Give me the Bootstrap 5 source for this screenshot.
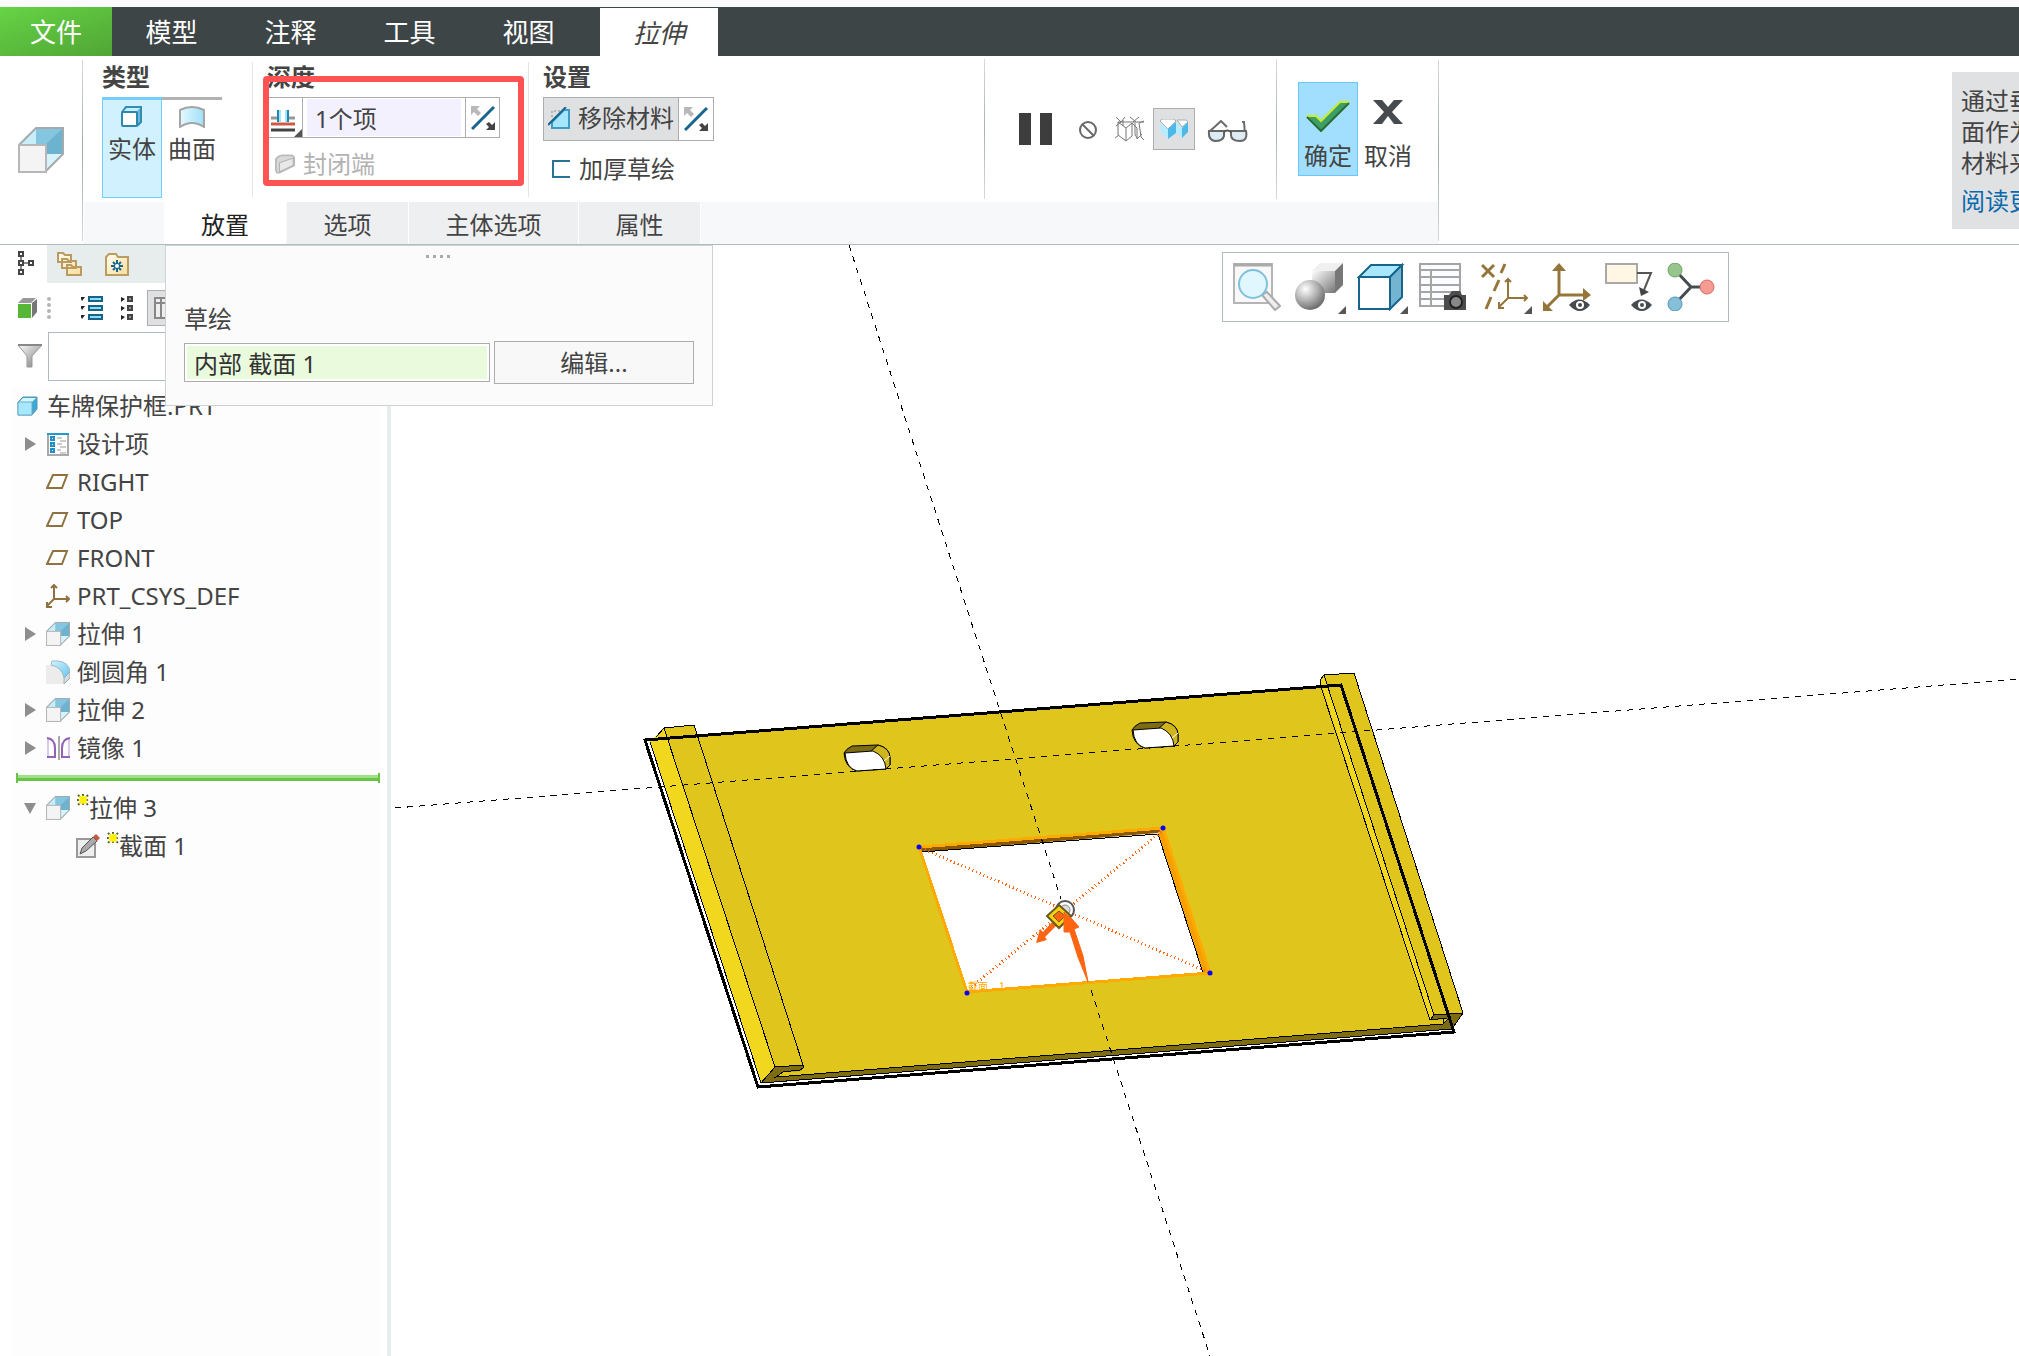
<!DOCTYPE html>
<html lang="zh-CN">
<head>
<meta charset="utf-8">
<meta name="viewport" content="width=device-width, initial-scale=1">
<title>车牌保护框.PRT</title>
<link rel="stylesheet" href="https://cdn.jsdelivr.net/npm/bootstrap@5.3.0/dist/css/bootstrap.min.css">
<style>
  body { font-family: "Noto Sans", "Noto Sans CJK SC", sans-serif; font-size: 24px; line-height: 32px; color: #444; background: #fff; overflow: hidden; }
  svg { display: block; flex: none; }
  button { background: none; border: 0; padding: 0; color: inherit; white-space: nowrap; }
  .title-strip { height: 7px; background: #fbfbfb; }

  /* main tabs */
  .main-tabs { height: 49px; background: #3d4547; font-size: 26px; }
  .main-tabs a { width: 119px; color: #fff; text-decoration: none; display: flex; align-items: center; justify-content: center; padding-top: 1px; }
  .main-tabs .file-tab { width: 112px; background: linear-gradient(160deg, #66d445, #50a535); }
  .main-tabs .open-tab { width: 118px; margin: 1px 0 0 12px; background: #fff; color: #444; font-style: italic; }

  /* ribbon */
  .ribbon { height: 189px; border-bottom: 1px solid #aebcbe; }
  .launcher { width: 83px; padding: 71px 0 0 18px; position: relative; }
  .edge::after { content: ""; position: absolute; right: 0; top: 4px; bottom: 3px; width: 1px; background: linear-gradient(#d5dada, #9fa9aa, #d5dada); }
  .tool-row { height: 146px; }
  .grp { position: relative; padding-top: 5px; }
  .grp::after { content: ""; position: absolute; right: 0; top: 6px; bottom: 5px; width: 1px; background: #e2e4e5; }
  .grp.strong::after { top: 3px; bottom: 3px; background: linear-gradient(#d5dada, #a9b2b3, #d5dada); }
  .grp:last-child::after { display: none; }
  .grp-name { font-weight: 700; line-height: 32px; height: 36px; color: #444; }
  .g-type { width: 170px; padding-left: 19px; }
  .g-depth { width: 276px; padding-left: 14px; }
  .g-set { width: 456px; padding-left: 14px; }
  .g-ctl { width: 292px; padding: 52px 0 0 33px; }
  .g-ok { width: 162px; padding: 26px 0 0 21px; }
  .big { width: 60px; height: 101px; display: flex; flex-direction: column; align-items: center; padding-top: 8px; }
  .big svg { margin-bottom: 5px; }
  .big.on { background: #d2f1fe; border: 1px solid #74cdfb; border-top-width: 3px; padding-top: 6px; }
  .big.off { border-top: 3px solid #b2b2b2; padding-top: 6px; }
  .combo { border: 1px solid #adadad; height: 41px; width: 233px; margin-bottom: 10px; }
  .combo > * + * { border-left: 1px solid #adadad; }
  .combo .drop { width: 34px; padding: 7px 0 0 3px; position: relative; }
  .corner { position: absolute; right: 0; bottom: 0; border: 4px solid; border-color: transparent #555 #555 transparent; }
  .count-cell { flex: 1; padding: 1px 4px; }
  .count-cell input { width: 100%; height: 37px; border: 0; background: #f4f1ff; padding: 0 8px; color: #444; }
  .flip { width: 34px; display: grid; place-items: center; }
  .faded { color: #b2b2b2; }
  .marker { position: absolute; left: 10px; top: 20px; width: 261px; height: 110px; border: 6px solid #ff5252; border-radius: 4px; pointer-events: none; }
  .remove { width: 171px; height: 44px; border: 1px solid #adadad; }
  .remove .main-btn { width: 136px; background: #dfe0e2; border-right: 1px solid #adadad; padding: 0 0 2px 4px; gap: 8px; }
  .preview-on { width: 42px; height: 42px; background: #dfe0e2; border: 1px solid #adadad; display: grid; place-items: center; }
  .confirm { width: 60px; height: 94px; display: flex; flex-direction: column; align-items: center; justify-content: flex-end; padding-bottom: 4px; }
  .confirm.on { background: #a2dffe; border: 1px solid #68c8fb; padding-bottom: 3px; }

  .sub-tabs { height: 42px; margin: 0 1px 1px 1px; background: #f6f8fa; padding-left: 80px; gap: 1px; }
  .sub-tabs a { color: #444; text-decoration: none; background: #eeeff1; width: 121px; text-align: center; line-height: 45px; }
  .sub-tabs a.open-tab { background: #fff; width: 122px; color: #222; }
  .sub-tabs a.wide { width: 169px; }
  .sub-tabs a + a { box-shadow: 1px 0 #fff; }
  .help { width: 67px; height: 157px; margin-top: 16px; background: #e0e1e3; padding: 13px 0 0 9px; overflow: hidden; white-space: nowrap; line-height: 31px; }
  .help a { color: #0b69ac; text-decoration: none; display: block; margin-top: 7px; }

  /* model tree */
  .side { width: 391px; height: 1111px; border-right: 4px solid #e7ecec; }
  .side-tabs { height: 38px; }
  .side-tabs .rest { background: #e7ecec; padding: 6px 0 0 10px; gap: 23px; }
  .side-tabs .tree-tab { width: 47px; padding: 0 0 3px 17px; }
  .side-tools { height: 47px; padding: 2px 0 0 17px; }
  .col-btn { width: 40px; height: 36px; background: #dfe0e2; border: 1px solid #adadad; padding: 6px; margin-left: 12px; }
  .filter { height: 52px; padding-left: 17px; gap: 5px; }
  .filter input { width: 320px; height: 49px; border: 1px solid #aebcbe; background: #fff; }
  .tree { background: #fdfdfd; margin: 5px 7px 0 12px; flex: 1; line-height: 38px; }
  .node { height: 38px; display: flex; align-items: center; white-space: nowrap; }
  .twist { width: 12px; height: 14px; margin: 0 10px 0 12px; flex: none; }
  .node svg.ico { margin-right: 7px; }
  .insert { height: 6px; margin: 8px 0 8px 4px; background: linear-gradient(#9edf8a 50%, #66c546 50%); position: relative; }
  .insert::before, .insert::after { content: ""; position: absolute; top: -2px; bottom: -2px; width: 2px; background: #66c546; }
  .insert::after { right: 0; }

  /* dashboard sheet and floating bar */
  .sheet { position: absolute; left: 165px; top: 0; width: 548px; height: 161px; background: #fbfbfb; border: 1px solid #ccd2d3; padding: 55px 18px 0 18px; }
  .sheet label { line-height: 36px; }
  .grip { position: absolute; top: 9px; left: 260px; display: flex; gap: 4px; }
  .grip i { width: 3px; height: 3px; background: #aaa; }
  .sheet input { width: 306px; height: 39px; border: 1px solid #adadad; padding: 0 9px; background: #eafbdd; box-shadow: inset 0 0 0 2px #fff; color: #333; }
  .sheet button { width: 201px; height: 43px; border: 1px solid #adadad; background: #f8f8f8; }
  .scene { width: 100%; height: auto; }
  .view-bar { position: absolute; left: 831px; top: 7px; width: 507px; height: 70px; border: 1px solid #aebcbe; background: #fff; padding: 10px; gap: 14px; }
  .view-bar button { position: relative; width: 48px; height: 48px; }
  .view-bar .corner { right: -3px; bottom: -3px; }
</style>
</head>
<body>
<svg width="0" height="0" class="position-absolute">
  <defs>
    <linearGradient id="gSilver" x1="0" y1="0" x2="1" y2="1"><stop offset="0" stop-color="#fff"/><stop offset="1" stop-color="#777"/></linearGradient>
    <radialGradient id="gBall" cx=".35" cy=".3" r=".75"><stop offset="0" stop-color="#fff"/><stop offset=".5" stop-color="#b5b5b5"/><stop offset="1" stop-color="#666"/></radialGradient>
    <linearGradient id="gSky" x1="0" y1="0" x2="1" y2="1"><stop offset="0" stop-color="#d5f4ff"/><stop offset="1" stop-color="#65c3ee"/></linearGradient>
    <linearGradient id="gSheet" x1="0" y1="0" x2="1" y2="0"><stop offset="0" stop-color="#e6f8fe"/><stop offset="1" stop-color="#9fe0f9"/></linearGradient>
    <linearGradient id="gFold" x1="0" y1="0" x2="1" y2="1"><stop offset="0" stop-color="#fffdf2"/><stop offset="1" stop-color="#fbdc9a"/></linearGradient>
    <symbol id="extrude" viewBox="0 0 46 46">
      <path d="M1 18 18 1H45V27L27 45V18z" fill="#a5dcf1"/>
      <path d="M27 27H45L27 45z" fill="#d8f3fc"/><path d="M1 18 18 1V18z" fill="#c9edf9"/><path d="M18 1H45L27 19H18z" fill="#84c6df"/>
      <path d="M27 18 45 1V27H27z" fill="#6db3d0"/>
      <path d="M1 18 18 1H45V27L27 45" fill="none" stroke="#a4aaad" stroke-width="2"/>
      <rect x="1" y="18" width="27" height="27" fill="#f4f4f4" stroke="#b7b7b7" stroke-width="2"/>
    </symbol>
    <symbol id="flipIcon" viewBox="0 0 24 24"><path d="M1 23 23 1" stroke="#17658c" stroke-width="3"/><path d="M0 0h9L6 3l4 4-3 3-4-4-3 3z" fill="#b8b8b8"/><path d="M24 24h-9l3-3-3-3 3-2 3 3 3-3z" fill="#444"/></symbol>
    <symbol id="eye" viewBox="0 0 22 13"><path d="M0 6Q10-5 21 6 11 18 0 6z" fill="#454b4e"/><circle cx="11" cy="6" r="4" fill="#fff"/><circle cx="11" cy="6" r="2" fill="#454b4e"/></symbol>
    <symbol id="plane" viewBox="0 0 24 24"><path d="M1 18 7 5H21L16 18z" fill="#fff" stroke="#8e7340" stroke-width="2"/></symbol>
    <symbol id="star" viewBox="0 0 12 12"><path d="M1 1l10 10M11 1 1 11M6 0v12M0 6h12" stroke="#5b5b2a" stroke-width="2" stroke-dasharray="2 1"/><path d="M6 1l1 2 3-1-1 3 2 1-2 1 1 3-3-1-1 2-1-2-3 1 1-3-2-1 2-1-1-3 3 1z" fill="#fff200"/></symbol>
    <symbol id="arrowR" viewBox="0 0 12 14"><path d="M1 0 12 7 1 14z" fill="#8e8e8e"/></symbol>
  </defs>
</svg>

<div class="title-strip"></div>
<nav class="main-tabs d-flex">
  <a class="file-tab" href="#">文件</a><a href="#">模型</a><a href="#">注释</a><a href="#">工具</a><a href="#">视图</a><a class="open-tab" href="#">拉伸</a>
</nav>

<header class="ribbon d-flex">
  <div class="launcher edge"><svg width="46" height="46"><use href="#extrude"/></svg></div>
  <div class="position-relative edge">
    <div class="tool-row d-flex">
      <section class="grp g-type">
        <div class="grp-name">类型</div>
        <div class="d-flex">
          <button class="big on"><svg width="22" height="22" viewBox="0 0 22 22"><path d="M1 6 5 1H20V16L16 20" fill="#6bb9dc" stroke="#318db5" stroke-width="2"/><path d="M2 6 6 2H19l-4 4z" fill="#c5effd"/><rect x="1" y="6" width="15" height="14" rx="1" fill="#fff" stroke="#2a87ae" stroke-width="2"/></svg>实体</button>
          <button class="big off"><svg width="26" height="22" viewBox="0 0 26 22"><path d="M1 4Q13-2 25 4V21Q13 13 1 21z" fill="url(#gSheet)" stroke="#a5a5a5" stroke-width="2"/></svg>曲面</button>
        </div>
      </section>
      <section class="grp g-depth">
        <div class="grp-name">深度</div>
        <div class="combo d-flex">
          <button class="drop" aria-label="深度选项"><svg width="24" height="24" viewBox="0 0 24 24"><path d="M0 9h6M18 9h6" stroke="#999" stroke-width="3"/><path d="M0 15h24" stroke="#cf5a42" stroke-width="3"/><path d="M0 21h24" stroke="#444" stroke-width="3"/><path d="M7 1v12M17 1v12" stroke="#1f86b5" stroke-width="2"/><path d="M9 1v12M15 1v12" stroke="#a5e6ff" stroke-width="2"/></svg><span class="corner"></span></button>
          <div class="count-cell"><input type="text" value="1个项" aria-label="深度"></div>
          <button class="flip" aria-label="反向"><svg width="24" height="24"><use href="#flipIcon"/></svg></button>
        </div>
        <button class="faded d-flex align-items-center ps-2" disabled><svg class="me-2" width="20" height="21" viewBox="0 0 22 22"><path d="M1 8V5Q4 1 9 1h10l2 2v9L5 20H2L1 17z" fill="#d9d9d9" stroke="#bbb" stroke-width="2"/><path d="M5 9 20 4v8L5 19z" fill="#e8e8e8" stroke="#aaa"/></svg>封闭端</button>
        <div class="marker"></div>
      </section>
      <section class="grp g-set strong">
        <div class="grp-name">设置</div>
        <div class="remove d-flex">
          <button class="main-btn d-flex align-items-center"><svg width="22" height="22" viewBox="0 0 22 22"><path d="M4 10V4h8" stroke="#888" stroke-dasharray="2 2" fill="none"/><path d="M4 21V15L16 3h5v18z" fill="#a5e6fd" stroke="#3f9cc2" stroke-width="2"/><path d="M0 18 18 0" stroke="#17658c" stroke-width="2"/></svg>移除材料</button>
          <button class="flip" aria-label="反向"><svg width="24" height="24"><use href="#flipIcon"/></svg></button>
        </div>
        <button class="d-flex align-items-center mt-2 ms-2 pt-1"><svg class="me-2" width="20" height="20" viewBox="0 0 20 20"><path d="M19 2H2V18H19" fill="none" stroke="#2a7196" stroke-width="2"/></svg>加厚草绘</button>
      </section>
      <section class="grp g-ctl strong d-flex align-items-start">
        <button class="mt-1" aria-label="暂停"><svg width="35" height="34" viewBox="0 0 35 34"><path d="M1 1h12v32H1zM22 1h12v32H22z" fill="#3d3d3d"/></svg></button>
        <button class="mt-2 ms-4 pt-1" aria-label="无预览"><svg width="22" height="20" viewBox="-1 0 22 20"><circle cx="10" cy="10" r="8" fill="none" stroke="#66696b" stroke-width="2"/><path d="M4 4 16 16" stroke="#66696b" stroke-width="2"/></svg></button>
        <button class="ms-3 mt-2" aria-label="分离预览"><svg width="30" height="26" viewBox="0 0 30 26" fill="none" stroke="#777"><path d="M1 1l5 5L1 10M10 1 6 6M15 1l6 5M24 1l-6 5M29 5l-5 2 2 14 3 3M3 6h26M3 6v13l8 6 6-5V7L11 12 3 6M11 12v13M17 7l5 5v11l5-5M20 7v12l3 4M0 22l4-3M8 4v6"/></svg></button>
        <button class="preview-on ms-2" aria-label="连接预览"><svg width="28" height="20" viewBox="0 0 28 20"><path d="M0 2 2 0H14L16 2 8 10zM17 1H26L28 3 22 8z" fill="#fff" stroke="#aaa"/><path d="M0 4 8 10V20L1 13z" fill="#b6ecff"/><path d="M8 10 16 3V14L8 20z" fill="#4db9e8"/><path d="M16 3 22 9V19L16 13z" fill="#b6ecff"/><path d="M22 9 28 3V13L22 19z" fill="#4db9e8"/></svg></button>
        <button class="ms-2 mt-2 ps-1 pt-1" aria-label="眼镜"><svg width="42" height="24" viewBox="0 0 42 24"><path d="M2 12 14 1 20 7M38 14 37 2H35" fill="none" stroke="#6b6b6b" stroke-width="2"/><path d="M2 11H17V16Q16 21 8 21 1 20 2 11zM24 11H39Q41 21 33 21 24 21 24 15z" fill="#dcebf4" stroke="#666" stroke-width="2"/><path d="M17 12q3-3 7 0" fill="none" stroke="#555" stroke-width="2"/></svg></button>
      </section>
      <section class="grp g-ok d-flex">
        <button class="confirm on"><svg class="mb-2" width="44" height="32" viewBox="0 0 44 32"><path d="M1 15H10L15 20 34 2H43L15 31z" fill="#3d9e68"/><path d="M1 16H10L15 21 34 2H43" fill="none" stroke="#c8ee28" stroke-width="2"/><path d="M43 3 15 31 1 17" fill="none" stroke="#276d31" stroke-width="2"/></svg>确定</button>
        <button class="confirm"><svg class="mb-3" width="30" height="24" viewBox="0 0 30 24"><path d="M0 0H9L15 7 21 0H30L19 12 30 24H21L15 16 9 24H0L11 12z" fill="#484b4d"/></svg>取消</button>
      </section>
    </div>
    <nav class="sub-tabs d-flex"><a class="open-tab" href="#">放置</a><a href="#">选项</a><a class="wide" href="#">主体选项</a><a href="#">属性</a></nav>
  </div>
  <aside class="help ms-auto">通过垂<br>面作为<br>材料来<a href="#">阅读更</a></aside>
</header>

<main class="d-flex position-relative">
  <aside class="side d-flex flex-column flex-shrink-0">
    <div class="side-tabs d-flex">
      <button class="tree-tab" aria-label="模型树"><svg width="20" height="26" viewBox="0 0 20 26" fill="none" stroke="#444" stroke-width="2"><path d="M4 6v5M4 15v5M6 13h6" stroke="#888"/><path d="M2 2h4v4H2zM2 11h4v4H2zM2 20h4v4H2zM12 11h4v4h-4z"/></svg></button>
      <div class="rest d-flex flex-grow-1 align-items-start">
        <button aria-label="文件夹"><svg width="25" height="25" viewBox="0 0 25 25" fill="url(#gFold)" stroke="#b99b62" stroke-width="2"><path d="M1 2h5l2 2h6v7H1zM5 8h5l2 2h7v7H5zM10 14h4l2 2h8v8H10z"/></svg></button>
        <button aria-label="收藏夹"><svg width="24" height="25" viewBox="0 0 24 25"><path d="M1 6 4 3h7l2 3h10v18H1z" fill="url(#gFold)" stroke="#bb9d63" stroke-width="2"/><path d="M12 9v12M6 15h12M8 11l8 8M16 11l-8 8" stroke="#17658c" stroke-width="2"/><circle cx="12" cy="15" r="2" fill="#fff"/></svg></button>
      </div>
    </div>
    <div class="side-tools d-flex align-items-center">
      <svg width="20" height="20" viewBox="0 0 20 20"><path d="M1 5 6 0H19L14 5z" fill="#999"/><path d="M15 5 20 1V14L15 20z" fill="#777"/><rect x="1" y="6" width="13" height="14" fill="#56b635"/></svg>
      <svg class="ms-2" width="8" height="24" viewBox="0 0 8 24" fill="#b5b5b5"><circle cx="4" cy="3" r="2"/><circle cx="4" cy="9" r="2"/><circle cx="4" cy="15" r="2"/><circle cx="4" cy="21" r="2"/></svg>
      <button class="ms-4 ps-1" aria-label="全部展开"><svg width="24" height="26" viewBox="1 0 24 26"><path d="M0 2h5L2 6zM0 11h5l-3 4zM0 20h5l-3 4z" fill="#222"/><path d="M9 2h13v4H9zM9 11h13v4H9zM9 20h13v4H9z" fill="#8bdcfb" stroke="#176488" stroke-width="2"/></svg></button>
      <button class="ms-3" aria-label="全部折叠"><svg width="14" height="26" viewBox="1 0 14 26"><path d="M1 2v5l4-3zM1 11v5l4-3zM1 20v5l4-3z" fill="#222"/><path d="M8 2h4v4H8zM8 11h4v4H8zM8 20h4v4H8z" fill="#999" stroke="#444" stroke-width="2"/></svg></button>
      <button class="col-btn" aria-label="树列"><svg width="24" height="24" viewBox="0 0 24 24"><path d="M1 1h20v20H1zM1 6h20M7 1v20M14 6v15" fill="#eee" stroke="#888" stroke-width="2"/><circle cx="15" cy="19" r="4" fill="#777"/></svg></button>
    </div>
    <div class="filter d-flex align-items-center">
      <svg width="26" height="24" viewBox="0 0 26 24"><path d="M1 1H25L15 12V23H10V12z" fill="url(#gSilver)" stroke="#999"/><path d="M1 1H25" stroke="#888" stroke-width="2"/></svg>
      <input type="text" aria-label="过滤">
    </div>
    <div class="tree">
      <div class="node"><svg class="ico ms-1" width="24" height="24" viewBox="0 0 24 24"><path d="M2 8 7 3H21V15L16 21H2z" fill="#3da7d6" stroke="#5b97ae"/><path d="M3 8 7 4H20l-4 4z" fill="#d6f6ff"/><path d="M2 8H16V21H2z" fill="#a9e7fd" stroke="#67afca"/></svg>车牌保护框.PRT</div>
      <div class="node"><svg class="twist"><use href="#arrowR"/></svg><svg class="ico" width="24" height="24" viewBox="0 0 24 24"><path d="M2 2h20v21H2z" fill="#fff" stroke="#aaa" stroke-width="2"/><path d="M1 2h22" stroke="#2499cd" stroke-width="2"/><path d="M5 5h3v3H5zM5 11h3v3H5zM5 17h3v3H5z" fill="#cceffb" stroke="#238fc2" stroke-width="2"/><path d="M11 6h5M14 9h6M11 12h5M14 15h6M11 18h4M14 21h6" stroke="#999"/></svg>设计项</div>
      <div class="node"><span class="twist"></span><svg class="ico" width="24" height="24"><use href="#plane"/></svg>RIGHT</div>
      <div class="node"><span class="twist"></span><svg class="ico" width="24" height="24"><use href="#plane"/></svg>TOP</div>
      <div class="node"><span class="twist"></span><svg class="ico" width="24" height="24"><use href="#plane"/></svg>FRONT</div>
      <div class="node"><span class="twist"></span><svg class="ico" width="24" height="24" viewBox="0 0 24 24"><path d="M8 1V15H23M8 15 1 22M5 4l3-3 3 3M20 12l3 3-3 3M1 18v5h5" fill="none" stroke="#8e7340" stroke-width="2"/></svg>PRT_CSYS_DEF</div>
      <div class="node"><svg class="twist"><use href="#arrowR"/></svg><svg class="ico" width="24" height="24"><use href="#extrude"/></svg>拉伸 1</div>
      <div class="node"><span class="twist"></span><svg class="ico" width="24" height="24" viewBox="0 0 24 24"><path d="M0 5H6Q17 6 18 24H0z" fill="#ececec"/><path d="M6 1H12Q23 2 24 12L18 18Q16 7 5 5z" fill="url(#gSky)" stroke="#9bb9c5"/><path d="M18 18 24 12V18L18 24z" fill="#ccdfe7" stroke="#aaa"/></svg>倒圆角 1</div>
      <div class="node"><svg class="twist"><use href="#arrowR"/></svg><svg class="ico" width="24" height="24"><use href="#extrude"/></svg>拉伸 2</div>
      <div class="node"><svg class="twist"><use href="#arrowR"/></svg><svg class="ico" width="24" height="24" viewBox="0 0 24 24" fill="none"><path d="M2 22V2M23 22V2" stroke="#d9c9ea" stroke-width="2"/><path d="M1 2Q9 3 9 12V21H1M24 2Q16 3 16 12V21H24" stroke="#9263b4" stroke-width="2"/><path d="M13 0V24" stroke="#aaa" stroke-width="2"/></svg>镜像 1</div>
      <div class="insert"></div>
      <div class="node"><svg class="twist" viewBox="0 0 12 14"><path d="M0 2H12L6 13z" fill="#8e8e8e"/></svg><svg class="ico" width="24" height="24"><use href="#extrude"/></svg><svg class="mb-3" width="12" height="12"><use href="#star"/></svg>拉伸 3</div>
      <div class="node ps-4"><span class="twist ms-4 me-0"></span><svg class="ico ms-1" width="24" height="24" viewBox="0 0 24 24"><path d="M1 5H19V23H1z" fill="#eee" stroke="#999" stroke-width="2"/><path d="M4 20 6 14 17 3 21 7 10 17z" fill="#aaa" stroke="#555"/><path d="M17 3 20 0 24 4 21 7z" fill="#c75445"/></svg><svg class="mb-3" width="12" height="12"><use href="#star"/></svg>截面 1</div>
    </div>
  </aside>

  <div class="flex-grow-1 position-relative">
    <svg class="scene" viewBox="391 245 1628 1111">
      <defs><g id="slot">
        <path d="M844 753Q846 749 852 746L878 745Q890 748 890 758V765L886 769 857 771Q845 768 844 753z" fill="#7d6c12" stroke="#000"/>
        <path d="M870 752 878 745Q890 748 890 758V765L886 769z" fill="#cfb51c" stroke="#000"/>
        <path d="M845 753 873 751Q885 756 886 769L857 771Q846 768 845 753z" fill="#fff" stroke="#000"/>
        <path d="M884 761 890 756" stroke="#fff"/>
      </g></defs>
      <!-- plate -->
      <path d="M650 742 656 737 664 728 694 725 697 735 1320 687V680L1324 675 1354 673 1463 1013 1452 1029 761 1083z" fill="#dfc51c"/>
      <path d="M650 742 664 728 775 1067 761 1083z" fill="#f2d71f"/>
      <path d="M1320 680 1324 675 1434 1015 1430 1020z" fill="#f2d71f"/>
      <path d="M775 1067 803 1065V1068L800 1071 783 1072 776 1077 1443 1024 1452 1015 1463 1013 1452 1029 761 1083z" fill="#7d6c12"/>
      <path d="M1434 1015 1463 1013 1459 1018 1430 1020z" fill="#7d6c12"/>
      <g fill="none" stroke="#000" stroke-width="1" shape-rendering="crispEdges">
        <path d="M656 737 664 728 694 725 803 1065V1068L800 1070 783 1072 776 1077 1443 1024 1449 1018"/>
        <path d="M650 742 761 1083 775 1067 803 1065M664 728 775 1067M761 1083 1452 1029 1463 1013 1354 673 1324 675 1320 680V684L1430 1020 1434 1015 1463 1013M1324 675 1434 1015M1430 1020 1447 1018M1443 1019v5"/>
      </g>
      <path d="M645 740 1341 685 1454 1032 758 1087z" fill="none" stroke="#000" stroke-width="3" shape-rendering="crispEdges"/>
      <use href="#slot"/><use href="#slot" x="288" y="-23"/>
      <!-- cut-out -->
      <path d="M919 847 1163 828 1210 973 967 993z" fill="#fff"/>
      <path d="M919 847 1163 828 1158 833 922 852z" fill="#8b5a00"/>
      <path d="M1163 828 1210 973 1203 973 1158 834z" fill="#f5a000"/>
      <g shape-rendering="crispEdges" fill="none">
        <path d="M922 852 1158 834 1203 973" stroke="#000"/>
        <path d="M919 847 1163 828 1210 973 967 992z" stroke="#ffaa00" stroke-width="3"/>
        <!-- datum axes -->
        <path d="M395 808 2019 679" stroke="#000" stroke-dasharray="6 6"/>
        <path d="M849 245 1061 899M1091 990 1210 1356" stroke="#000" stroke-dasharray="6 6"/>
        <path d="M921 848 1208 972M1161 832 969 989" stroke="#ff6410" stroke-width="3" stroke-dasharray="1 3"/>
      </g>
      <g fill="#0a00ff"><circle cx="919" cy="847" r="2.5"/><circle cx="1163" cy="828" r="2.5"/><circle cx="1210" cy="973" r="2.5"/><circle cx="967" cy="993" r="2.5"/></g>
      <text x="968" y="990" font-size="10" fill="#ffaa00">截面</text><text x="999" y="990" font-size="10" fill="#ffaa00">1</text>
      <circle cx="1065" cy="910" r="9" fill="#fff" stroke="#555" stroke-width="2"/><circle cx="1065" cy="910" r="5" fill="#ddd" stroke="#888"/>
      <path d="M1053 921 1043 932 1040 929 1036 943 1047 940 1045 937 1057 925z" fill="#ff6410"/>
      <path d="M1059 905 1071 916 1059 928 1047 916z" fill="#ffcf10" stroke="#665a20" stroke-width="2"/>
      <path d="M1059 911 1065 916 1059 922 1053 916z" fill="#ff6410" stroke="#665a20"/>
      <path d="M1064 912Q1072 918 1079 927L1074 929 1083 956 1088 982 1078 957 1070 932 1064 932z" fill="#ff6410" stroke="#ff6410" stroke-width="1"/>
    </svg>
    <div class="view-bar d-flex">
      <button aria-label="重新调整"><svg width="48" height="48" viewBox="0 0 48 48"><path d="M1 1H39V40H1z" fill="#f8f8f8" stroke="#b5b5b5" stroke-width="2"/><path d="M1 2H39" stroke="#aaa" stroke-width="3"/><path d="M29 32 34 29 47 43 42 47z" fill="#eee" stroke="#aaa" stroke-width="2"/><circle cx="20" cy="21" r="14" fill="#e0f7ff" stroke="#7fc1dc" stroke-width="2"/></svg></button>
      <button aria-label="着色"><svg width="48" height="48" viewBox="0 0 48 48"><path d="M17 8H40V30H17z" fill="url(#gSilver)"/><path d="M17 8 25 0H48L40 8z" fill="#f0f0f0"/><path d="M40 8 48 0V22L40 30z" fill="#777"/><circle cx="15" cy="32" r="15" fill="url(#gBall)"/></svg><span class="corner"></span></button>
      <button aria-label="显示样式"><svg width="48" height="48" viewBox="0 0 48 48" stroke="#17658c" stroke-width="2"><path d="M2 14 14 2H45L33 14z" fill="#a9e7fd"/><path d="M33 14 45 2V34L33 46z" fill="#73b4d1"/><path d="M2 14H33V46H2z" fill="#fff"/></svg><span class="corner"></span></button>
      <button aria-label="视图管理器"><svg width="48" height="48" viewBox="0 0 48 48"><path d="M1 1H41V43H1zM1 7H41M1 14H41M1 22H41M1 29H41M1 36H41M12 7V43" fill="#fafcff" stroke="#a5a5a5" stroke-width="2"/><path d="M25 32h5l3-4h8l2 4h4v15H25z" fill="#4c4c4c"/><circle cx="37" cy="39" r="6" fill="#888" stroke="#222" stroke-width="2"/></svg></button>
      <button aria-label="基准显示"><svg width="48" height="48" viewBox="0 0 48 48" fill="none" stroke="#94763a" stroke-width="2"><path d="M1 2 13 14M13 2 1 14M24 1 20 10M18 17 13 28M10 34 5 46" stroke-width="3"/><path d="M27 16V35H46M27 35 18 44M24 19l3-3 3 3M43 32l3 3-3 3M18 39v6h5"/></svg><span class="corner"></span></button>
      <button aria-label="坐标系"><svg width="48" height="48" viewBox="0 0 48 48"><path d="M16 5V32H42M16 32 3 45" fill="none" stroke="#94763a" stroke-width="3"/><path d="M16 0 23 8H9zM48 32 40 25V38zM0 48V38L10 48z" fill="#94763a"/><use href="#eye" x="26" y="36" width="22" height="13"/></svg></button>
      <button aria-label="注释显示"><svg width="48" height="48" viewBox="0 0 48 48"><path d="M1 1H32V20H1z" fill="#fff6e3" stroke="#a8a8a8" stroke-width="2"/><path d="M32 10H46L39 27" fill="none" stroke="#555" stroke-width="2"/><path d="M34 24 44 29 36 33z" fill="#444"/><use href="#eye" x="26" y="36" width="22" height="13"/></svg></button>
      <button aria-label="旋转中心"><svg width="48" height="48" viewBox="0 0 48 48"><path d="M8 7 24 24 8 41M24 24H40" fill="none" stroke="#454b4e" stroke-width="3"/><circle cx="8" cy="7" r="7" fill="#98c58d" stroke="#69a45c"/><circle cx="8" cy="41" r="7" fill="#87bed8" stroke="#4f94b6"/><circle cx="40" cy="24" r="7" fill="#f59b93" stroke="#d96b61"/></svg></button>
    </div>
  </div>

  <section class="sheet">
    <div class="grip"><i></i><i></i><i></i><i></i></div>
    <label class="d-block" for="sk">草绘</label>
    <div class="d-flex align-items-center gap-1 pt-1"><input id="sk" type="text" value="内部 截面 1"><button>编辑...</button></div>
  </section>
</main>
<script src="https://cdn.jsdelivr.net/npm/bootstrap@5.3.0/dist/js/bootstrap.bundle.min.js"></script>
</body>
</html>
